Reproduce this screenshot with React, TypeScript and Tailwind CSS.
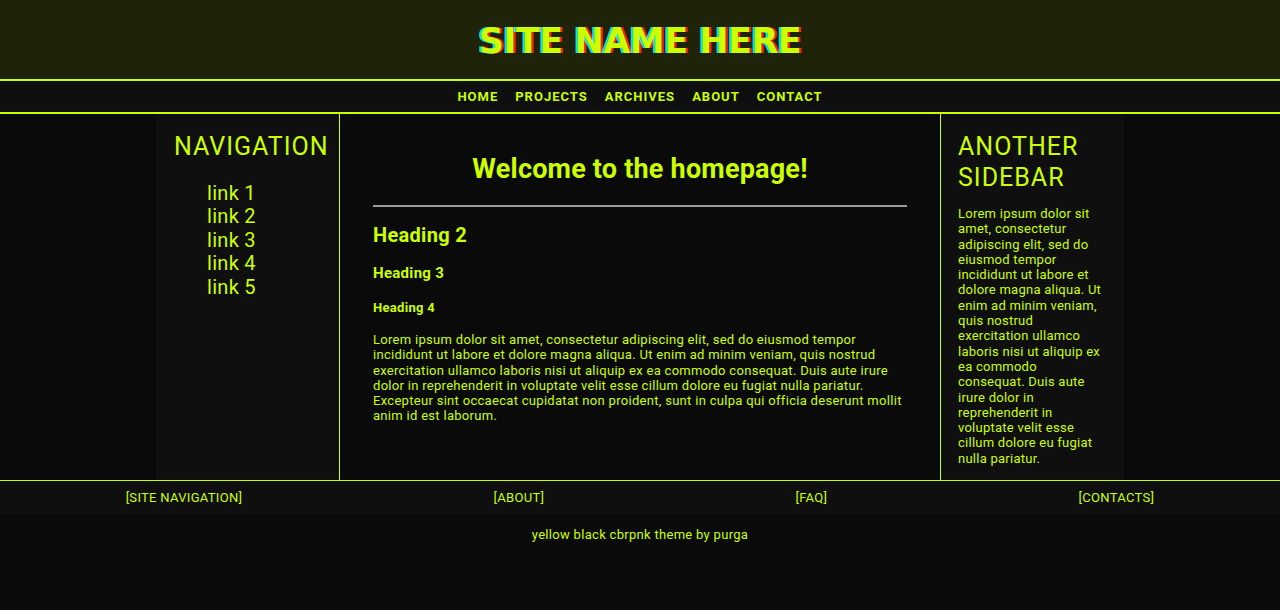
const navItems = ["HOME", "PROJECTS", "ARCHIVES", "ABOUT", "CONTACT"];
const sideLinks = ["link 1", "link 2", "link 3", "link 4", "link 5"];
const footerLinks = ["[SITE NAVIGATION]", "[ABOUT]", "[FAQ]", "[CONTACTS]"];

const lorem =
  "Lorem ipsum dolor sit amet, consectetur adipiscing elit, sed do eiusmod tempor incididunt ut labore et dolore magna aliqua. Ut enim ad minim veniam, quis nostrud exercitation ullamco laboris nisi ut aliquip ex ea commodo consequat. Duis aute irure dolor in reprehenderit in voluptate velit esse cillum dolore eu fugiat nulla pariatur.";

const App = () => {
  return (
    <div className="min-h-[610px] bg-[#0a0a0a] text-[#ccff00] font-['Roboto',sans-serif]">
      <header className="h-[81px] pt-[3px] bg-[#1e2309] border-b-2 border-[#ccff00] flex items-center justify-center">
        <h1 className="font-['DejaVu_Sans',sans-serif] font-bold text-[35px] tracking-[-0.5px] text-[#ccff00] [text-shadow:-2px_0_#00e5ff,2px_0_#ff2020]">
          SITE NAME HERE
        </h1>
      </header>

      <nav className="h-[33px] bg-[#0f0f0f] border-b-2 border-[#ccff00] flex items-center justify-center gap-[17px]">
        {navItems.map((item) => (
          <a key={item} className="text-[13px] font-bold tracking-[1px] cursor-pointer">
            {item}
          </a>
        ))}
      </nav>

      <div className="flex justify-center min-h-[366px]">
        <div className="w-[184px] bg-[#0f0f0f] border-r border-[#ccff00] pl-[18px] pt-[18px]">
          <h2 className="text-[25px] leading-[30px] tracking-[1px]">NAVIGATION</h2>
          <ul className="mt-[20px] pl-[33px]">
            {sideLinks.map((link) => (
              <li key={link} className="text-[20px] leading-[23.4px] tracking-[0.3px]">
                <a className="cursor-pointer">{link}</a>
              </li>
            ))}
          </ul>
        </div>

        <main className="w-[600px] px-[33px] pt-[37px] tracking-[0.3px]">
          <h1 className="text-center text-[27px] font-bold leading-[36px] tracking-[0.2px]">Welcome to the homepage!</h1>
          <hr className="mt-[18px] border-t-2 border-[#9a9a9a]" />
          <h2 className="mt-[16px] text-[20px] font-bold leading-[24px]">Heading 2</h2>
          <h3 className="mt-[17px] text-[15px] font-bold leading-[18px]">Heading 3</h3>
          <h4 className="mt-[18px] text-[13px] font-bold leading-[16px]">Heading 4</h4>
          <p className="mt-[16px] text-[13px] leading-[15.3px]">
            {lorem} Excepteur sint occaecat cupidatat non proident, sunt in culpa qui officia deserunt mollit anim id est laborum.
          </p>
        </main>

        <div className="w-[184px] bg-[#0f0f0f] border-l border-[#ccff00] pl-[17px] pr-[17px] pt-[17px]">
          <h2 className="text-[25px] leading-[31px] tracking-[1px]">ANOTHER SIDEBAR</h2>
          <p className="mt-[13px] text-[13px] leading-[15.3px] tracking-[0.25px]">{lorem}</p>
        </div>
      </div>

      <div className="h-[34px] bg-[#0f0f0f] border-t border-[#ccff00] flex items-center justify-around tracking-[0.3px]">
        {footerLinks.map((link) => (
          <a key={link} className="text-[13px] cursor-pointer">
            {link}
          </a>
        ))}
      </div>

      <div className="pt-[11px] text-center text-[13px] tracking-[0.3px]">yellow black cbrpnk theme by purga</div>
    </div>
  );
};

export default App;
